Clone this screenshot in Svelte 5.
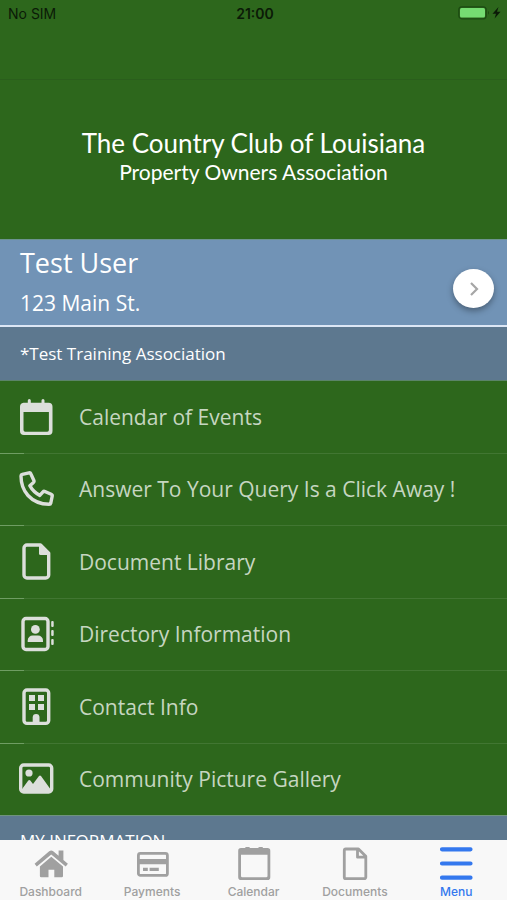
<script lang="ts">
  type Item = { icon: string; label: string };

  const menuItems: Item[] = [
    { icon: "calendar", label: "Calendar of Events" },
    { icon: "phone", label: "Answer To Your Query Is a Click Away !" },
    { icon: "document", label: "Document Library" },
    { icon: "directory", label: "Directory Information" },
    { icon: "building", label: "Contact Info" },
    { icon: "gallery", label: "Community Picture Gallery" }
  ];

  const tabs: Item[] = [
    { icon: "home", label: "Dashboard" },
    { icon: "card", label: "Payments" },
    { icon: "calendar", label: "Calendar" },
    { icon: "document", label: "Documents" },
    { icon: "menu", label: "Menu" }
  ];

  let activeTab = $state("Menu");
</script>

<div class="screen">
  <div class="status-bar">
    <span class="carrier">No SIM</span>
    <span class="time">21:00</span>
    <svg class="battery" viewBox="0 0 44 16" aria-hidden="true">
      <rect x="0.8" y="1.8" width="27.4" height="12" rx="3" fill="none" stroke="#1c4a12" stroke-width="1.2" />
      <rect x="2" y="3" width="25" height="9.6" rx="1.5" fill="#76dc72" />
      <path d="M30 5.8 Q32 7.8 30 9.8Z" fill="#1c4a12" />
      <path d="M40.5 2 L34.5 8.8 H38 L36.6 13.6 L42.5 6.8 H39Z" fill="#0b1a07" />
    </svg>
  </div>

  <main class="content">
    <header class="banner">
      <h1>The Country Club of Louisiana</h1>
      <p>Property Owners Association</p>
    </header>

    <section class="user">
      <div class="user-text">
        <h2>Test User</h2>
        <p>123 Main St.</p>
      </div>
      <button class="next-btn" aria-label="Switch account">
        <svg viewBox="0 0 16 16" aria-hidden="true">
          <path d="M5 2 L11 8 L5 14" fill="none" stroke="#a6a6a6" stroke-width="2.2" />
        </svg>
      </button>
    </section>

    <div class="association">*Test Training Association</div>

    <ul class="menu">
      {#each menuItems as item}
        <li>
          <a href="#{item.icon}">
            <svg class="menu-icon" viewBox="0 0 40 40" aria-hidden="true">
              {#if item.icon === "calendar"}
                <path fill-rule="evenodd" d="M7.5 5.8 H11.8 V3.5 a1.5 1.5 0 0 1 3 0 V5.8 H25.5 V3.5 a1.5 1.5 0 0 1 3 0 V5.8 H32.5 a4 4 0 0 1 4 4 V34 a4 4 0 0 1-4 4 H8 a4 4 0 0 1-4-4 V9.8 a4 4 0 0 1 3.5-4Z M7.5 15 V33 a1.7 1.7 0 0 0 1.7 1.7 H31.2 a1.7 1.7 0 0 0 1.7-1.7 V15Z" />
              {:else if item.icon === "phone"}
                <path class="line" d="M6.3 5.4 L13 3.8 Q14.3 3.5 14.8 4.7 L18 11.7 Q18.4 12.8 17.5 13.5 L13.8 16.7 Q17.5 23.3 23.8 26.4 L27 22.9 Q27.8 22 28.9 22.5 L35.2 25.3 Q36.5 25.9 36.2 27.2 L34.8 34 Q34.5 35.3 33.1 35.3 Q19.8 35 12 26.5 Q5 18.7 5 7 Q5 5.7 6.3 5.4Z" />
              {:else if item.icon === "document"}
                <path class="line" d="M11 3 H24.5 L32.7 11.2 V33 a3 3 0 0 1-3 3 H11 a3 3 0 0 1-3-3 V6 a3 3 0 0 1 3-3Z" />
                <path d="M23 2 H25 L34 11 V13 H24.5 a1.5 1.5 0 0 1-1.5-1.5Z" />
              {:else if item.icon === "directory"}
                <rect class="line" x="7" y="4.5" width="25" height="31" rx="3" />
                <circle cx="19.4" cy="15.4" r="4.4" />
                <path d="M11.7 28 V26.5 a5 5 0 0 1 5-5 H22 a5 5 0 0 1 5 5 V28Z" />
                <rect x="35.2" y="7" width="2.5" height="6" rx="1" />
                <rect x="35.2" y="16" width="2.5" height="6" rx="1" />
                <rect x="35.2" y="25" width="2.5" height="6" rx="1" />
              {:else if item.icon === "building"}
                <rect class="line" x="8" y="3" width="24.7" height="33.4" rx="3" />
                <path d="M13 8 h6 v6 h-6Z M22 8 h6 v6 h-6Z M13 17 h6 v6 h-6Z M22 17 h6 v6 h-6Z" />
                <path d="M16.7 37 V30.5 a3.4 3.4 0 0 1 6.8 0 V37Z" />
              {:else}
                <rect class="line" x="4.7" y="6" width="31" height="27" rx="3" />
                <circle cx="13" cy="14" r="3.6" />
                <path d="M5 33 V31.5 L12.3 21.5 Q13.3 20.3 14.3 21.5 L17 25 L23 17 Q24 15.8 25 17 L35.4 31.5 V33Z" />
              {/if}
            </svg>
            <span>{item.label}</span>
          </a>
        </li>
      {/each}
    </ul>

    <h3 class="section-title">MY INFORMATION</h3>
  </main>

  <nav class="tab-bar">
    {#each tabs as tab}
      <button class="tab" class:active={activeTab === tab.label} onclick={() => (activeTab = tab.label)}>
        <svg class="tab-icon" viewBox="0 0 36 36" aria-hidden="true">
          {#if tab.icon === "home"}
            <path d="M18.3 10.8 L30 20.5 V30 a1.2 1.2 0 0 1-1.2 1.2 H21.3 V23.8 H15.5 V31.2 H8.1 A1.2 1.2 0 0 1 6.9 30 V20.5Z" />
            <path d="M1.6 17.8 L16.2 5.2 Q18.2 3.6 20.2 5.2 L25.6 9.8 V4.6 H30.4 V14 L34.9 17.8 L32.7 20.6 L18.2 8.5 L3.8 20.6Z" />
          {:else if tab.icon === "card"}
            <rect class="line" x="4.4" y="7.4" width="29" height="22" rx="2" />
            <path d="M4 13 H33.4 V18.2 H4Z M9 21.8 H13.8 V25 H9Z M15.6 21.8 H24.8 V25 H15.6Z" />
          {:else if tab.icon === "calendar"}
            <path fill-rule="evenodd" d="M5 2 H9 Q9.2 1 10.4 1 H12.6 Q13.8 1 14 2 H22.2 Q22.4 1 23.6 1 H25.8 Q27 1 27.2 2 H31.5 a2.8 2.8 0 0 1 2.8 2.8 V31.2 a2.8 2.8 0 0 1-2.8 2.8 H5 a2.8 2.8 0 0 1-2.8-2.8 V4.8 A2.8 2.8 0 0 1 5 2Z M5 8.8 V30 a1.3 1.3 0 0 0 1.3 1.3 H30.2 a1.3 1.3 0 0 0 1.3-1.3 V8.8Z" />
          {:else if tab.icon === "document"}
            <path class="line" d="M8.8 3 H21.5 L28.8 10.3 V31.2 a1.5 1.5 0 0 1-1.5 1.5 H8.8 a1.5 1.5 0 0 1-1.5-1.5 V4.5 a1.5 1.5 0 0 1 1.5-1.5Z M20.5 3 V11.2 H28.8" />
          {:else}
            <path d="M4 1.2 H32.5 a2.1 2.1 0 0 1 0 4.2 H4 a2.1 2.1 0 0 1 0-4.2Z M4 15.4 H32.5 a2.1 2.1 0 0 1 0 4.2 H4 a2.1 2.1 0 0 1 0-4.2Z M4 29.6 H32.5 a2.1 2.1 0 0 1 0 4.2 H4 a2.1 2.1 0 0 1 0-4.2Z" />
          {/if}
        </svg>
        <span>{tab.label}</span>
      </button>
    {/each}
  </nav>
</div>

<style>
  :global(body) {
    margin: 0;
    background: #2d671c;
  }

  .screen {
    height: 100vh;
    display: flex;
    flex-direction: column;
    overflow: hidden;
    background: #2d671c;
    color: #fff;
    font-family: "Open Sans", sans-serif;
  }

  h1, h2, h3, p, ul {
    margin: 0;
    padding: 0;
    font-weight: 400;
  }

  .status-bar {
    flex: none;
    display: grid;
    grid-template-columns: 1fr auto 1fr;
    align-items: start;
    height: 74px;
    padding: 5px 5px 0 8px;
    border-bottom: 1px solid #2a5e1c;
    color: #0b1a07;
    font: 400 14px/18px Inter, sans-serif;
  }

  .time {
    font-weight: 600;
  }

  .battery {
    justify-self: end;
    width: 44px;
    height: 16px;
  }

  .content {
    flex: 1;
    min-height: 0;
    overflow-y: auto;
    scrollbar-width: none;
  }

  .banner {
    display: flex;
    flex-direction: column;
    align-items: center;
    justify-content: center;
    height: 153px;
    padding-bottom: 6px;
    font-family: Lato, sans-serif;
    font-variant-ligatures: none;
  }

  .banner h1 {
    font-size: 26px;
    line-height: 30px;
  }

  .banner p {
    font-size: 21px;
    line-height: 28px;
  }

  .user {
    display: flex;
    align-items: center;
    justify-content: space-between;
    padding: 0 13px 0 20px;
    height: 85px;
    border-top: 1px solid #6d9390;
    border-bottom: 2px solid #dce6f5;
    background: #7193b6;
  }

  .user h2 {
    font-size: 27px;
    line-height: 40px;
  }

  .user p {
    font-size: 21px;
    line-height: 40px;
  }

  .next-btn {
    display: flex;
    align-items: center;
    justify-content: center;
    width: 41px;
    height: 39px;
    margin-top: 12px;
    padding: 0;
    border: none;
    border-radius: 50%;
    background: #fff;
    box-shadow: 0 3px 6px rgba(0, 0, 0, 0.35);
    cursor: pointer;
  }

  .next-btn svg {
    width: 16px;
    height: 16px;
  }

  .association {
    padding: 0 20px;
    background: #5d788f;
    border-bottom: 1px solid #5b8468;
    font-size: 17px;
    line-height: 53px;
  }

  .menu {
    display: grid;
    grid-auto-rows: 1fr;
    min-height: 435px;
    list-style: none;
  }

  .menu li {
    border-bottom: 1px solid;
    border-image: linear-gradient(to right, #6f9d63 25px, #417632 25px) 1;
  }

  .menu li:last-child {
    border-image: none;
    border-bottom-color: #6f937c;
  }

  .menu a {
    display: flex;
    align-items: center;
    gap: 23px;
    height: 100%;
    padding: 0 16px;
    color: #c6d6c1;
    font-size: 21px;
    text-decoration: none;
  }

  .menu-icon {
    flex: none;
    width: 40px;
    height: 40px;
    fill: #dcdfdb;
    stroke: none;
  }

  .menu-icon .line {
    fill: none;
    stroke: #dcdfdb;
    stroke-width: 3.4px;
    stroke-linejoin: round;
  }

  .section-title {
    padding: 10px 20px;
    background: #5d788f;
    font-size: 17px;
    line-height: 30px;
  }

  .tab-bar {
    flex: none;
    display: flex;
    height: 60px;
    background: #f8f8f8;
  }

  .tab {
    flex: 1;
    min-width: 0;
    display: flex;
    flex-direction: column;
    align-items: center;
    gap: 2px;
    padding: 6px 0 0;
    border: none;
    background: none;
    color: #a0a0a0;
    font: 500 12px/16px Inter, sans-serif;
    cursor: pointer;
  }

  .tab.active {
    color: #3478ee;
  }

  .tab-icon {
    width: 36px;
    height: 36px;
    fill: currentColor;
  }

  .tab-icon .line {
    fill: none;
    stroke: currentColor;
    stroke-width: 2.8px;
    stroke-linejoin: round;
  }
</style>
